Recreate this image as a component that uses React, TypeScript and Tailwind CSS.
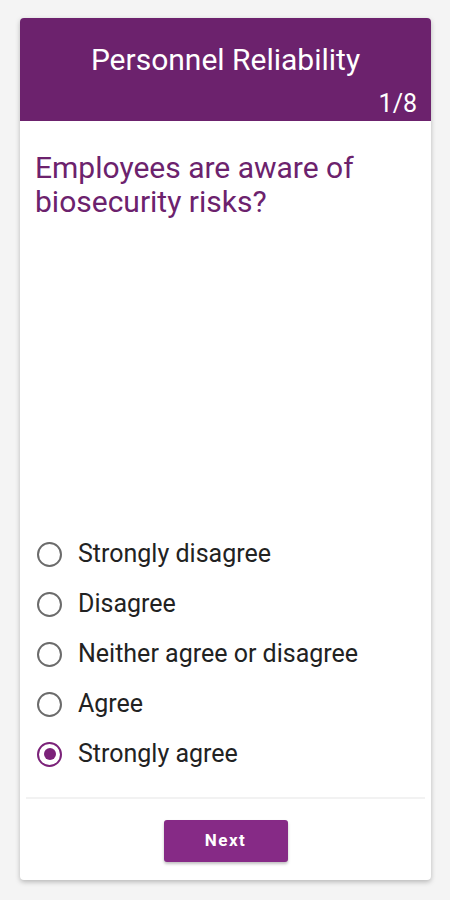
import React, { useState } from 'react';

const OPTIONS = [
  'Strongly disagree',
  'Disagree',
  'Neither agree or disagree',
  'Agree',
  'Strongly agree',
];

function Radio({ checked }: { checked: boolean }) {
  return (
    <span
      className={`w-[25px] h-[25px] rounded-full border-2 flex items-center justify-center shrink-0 ${
        checked ? 'border-[#7b2279]' : 'border-[#6b6b6b]'
      }`}
    >
      {checked && <span className="w-[12px] h-[12px] rounded-full bg-[#7b2279]" />}
    </span>
  );
}

export default function App() {
  const [selected, setSelected] = useState(4);

  return (
    <div className="w-[450px] h-[900px] bg-[#f4f4f4] pt-[18px] px-[20px] font-['Roboto',sans-serif]">
      <div className="w-[411px] h-[862px] bg-white rounded-[4px] shadow-[0_2px_5px_rgba(0,0,0,0.25)] flex flex-col overflow-hidden">
        {/* Header */}
        <div className="h-[103px] bg-[#6c226d] text-white flex flex-col px-[14px]">
          <div className="text-center text-[30px] leading-none pt-[27px]">Personnel Reliability</div>
          <div className="text-right text-[25px] leading-none mt-[16px]">1/8</div>
        </div>

        {/* Question */}
        <div className="px-[15px] pt-[30px] text-[30px] leading-[34px] text-[#6c226d]">
          Employees are aware of biosecurity risks?
        </div>

        <div className="flex-1" />

        {/* Options */}
        <div className="flex flex-col pl-[17px] pb-[18px]">
          {OPTIONS.map((label, i) => (
            <button
              key={label}
              onClick={() => setSelected(i)}
              className="h-[50px] flex items-center gap-[16px] text-left"
            >
              <Radio checked={selected === i} />
              <span className="text-[25px] text-[#222]">{label}</span>
            </button>
          ))}
        </div>

        <div className="mx-[6px] h-[2px] bg-[#f2f2f2]" />

        {/* Footer */}
        <div className="flex justify-center pt-[21px] pb-[18px]">
          <button className="w-[124px] h-[42px] rounded-[3px] bg-[#862a86] text-white font-bold text-[17px] tracking-[1.5px] shadow-[0_2px_3px_rgba(0,0,0,0.25)]">
            Next
          </button>
        </div>
      </div>
    </div>
  );
}
